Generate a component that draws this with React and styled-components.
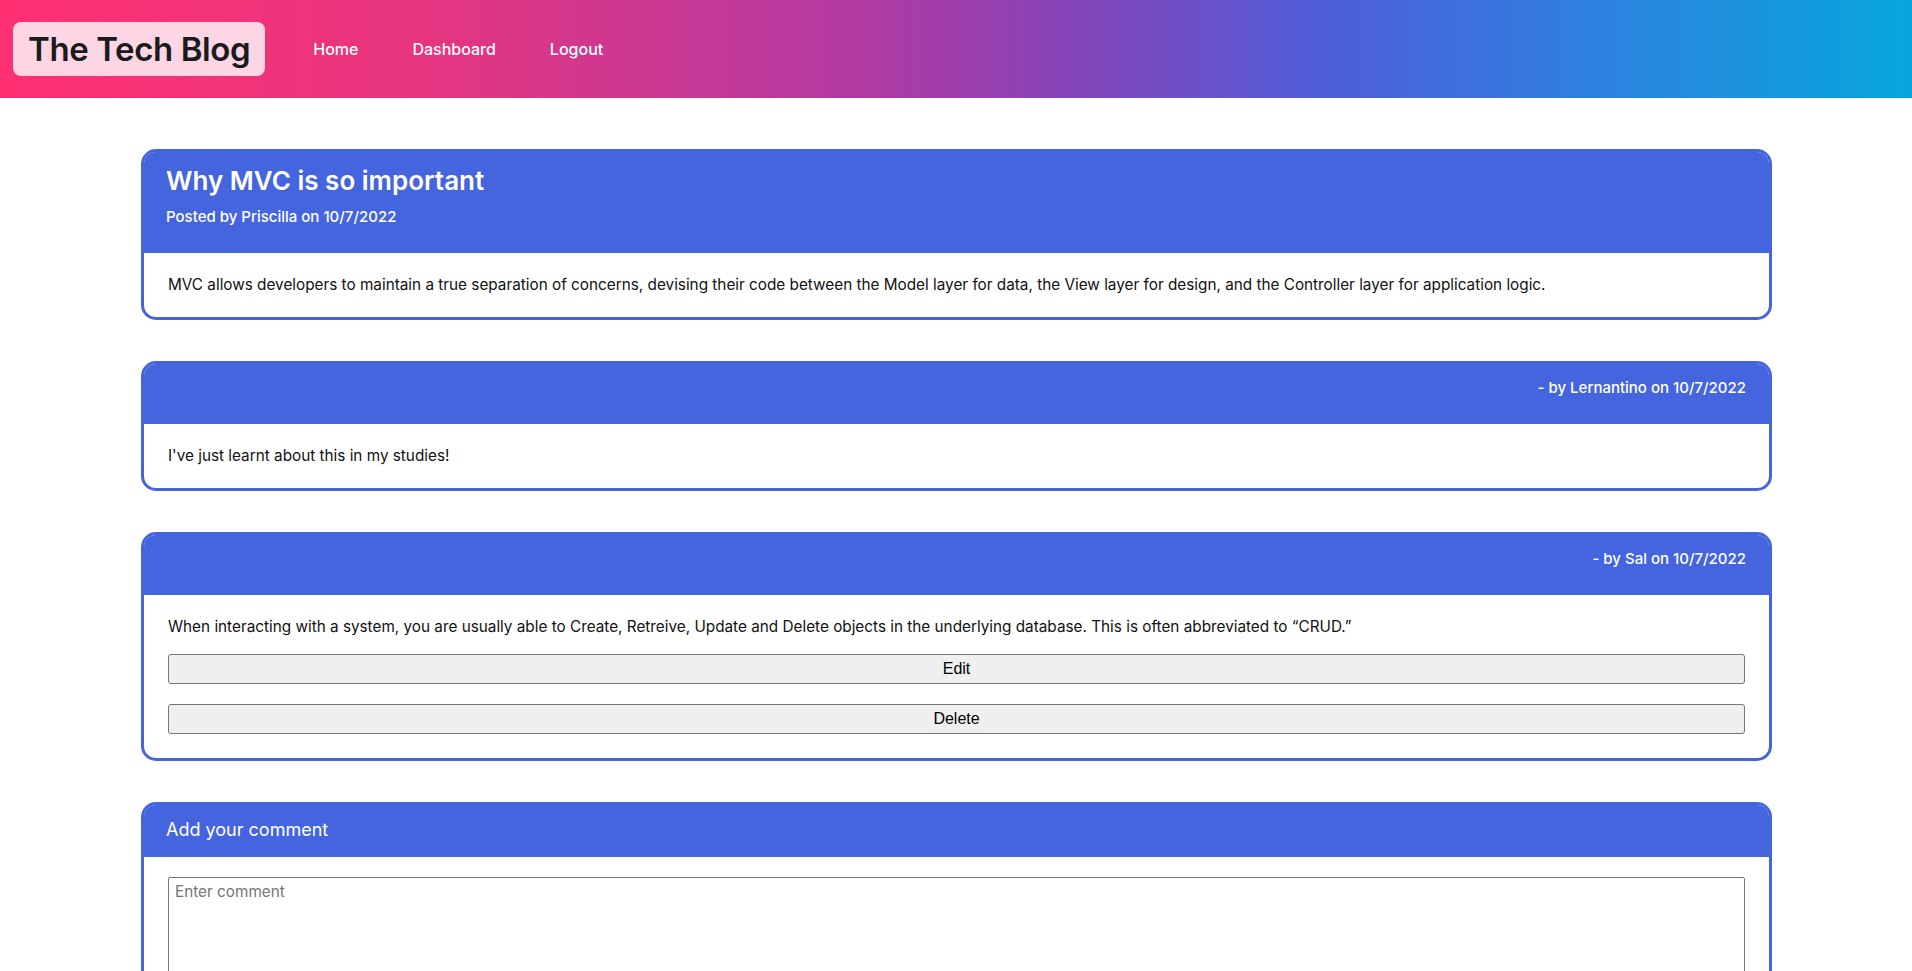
import React from "react";
import styled, { createGlobalStyle } from "styled-components";

const Global = createGlobalStyle`
  html, body { margin: 0; padding: 0; background: #fff; }
  body { font-family: Inter, "Noto Sans", sans-serif; color: #111; }
  * { box-sizing: border-box; }
`;

const Header = styled.header`
  height: 98px;
  display: flex;
  align-items: center;
  padding-left: 13px;
  background: linear-gradient(90deg, #ff2f72 0%, #e6357f 22%, #b13aa2 45%, #8a43b6 55%, #4d5edb 70%, #2f80df 83%, #07a6dc 100%);
`;

const Logo = styled.div`
  height: 54px;
  display: flex;
  align-items: center;
  padding: 0 15px;
  border-radius: 8px;
  background: #fcd6e4;
  color: #1b1b1b;
  font-size: 33px;
  font-weight: 600;
  letter-spacing: -0.4px;
`;

const Nav = styled.nav`
  display: flex;
  gap: 54px;
  margin-left: 48px;
`;

const NavLink = styled.a`
  color: #fff;
  font-size: 16px;
  font-weight: 500;
  text-decoration: none;
`;

const Main = styled.main`
  display: flex;
  flex-direction: column;
  gap: 41px;
  padding: 51px 140px 40px 141px;
`;

const Card = styled.section`
  border: 3px solid #4565df;
  border-radius: 15px;
  overflow: hidden;
  background: #fff;
`;

const CardHead = styled.div`
  background: #4565df;
  color: #fff;
  display: flex;
  flex-direction: column;
  align-items: ${(p) => (p.$right ? "flex-end" : "flex-start")};
  justify-content: flex-start;
  padding: ${(p) => p.$pad};
  height: ${(p) => p.$h}px;
`;

const Title = styled.h2`
  margin: 0;
  font-size: 26px;
  font-weight: 600;
  line-height: 34px;
`;

const Meta = styled.div`
  font-size: 15px;
  font-weight: 500;
  line-height: 22px;
  margin-top: ${(p) => p.$mt || 0}px;
`;

const HeadLabel = styled.div`
  font-size: 18px;
  font-weight: 400;
  line-height: 24px;
`;

const CardBody = styled.div`
  padding: ${(p) => p.$pt || 21}px 24px ${(p) => p.$pb || 21}px 24px;
  display: flex;
  flex-direction: column;
`;

const Text = styled.p`
  margin: 0;
  font-size: 15.3px;
  line-height: 22px;
  color: #111;
`;

const Button = styled.button`
  margin-top: ${(p) => p.$mt}px;
  height: 30px;
  width: 100%;
  background: #efefef;
  border: 1px solid #767676;
  border-radius: 3px;
  font-family: "Liberation Sans", Arial, sans-serif;
  font-size: 16px;
  color: #000;
`;

const TextArea = styled.textarea`
  width: 100%;
  height: 120px;
  border: 1px solid #767676;
  border-radius: 2px;
  padding: 4px 6px;
  font-family: Inter, sans-serif;
  font-size: 15.3px;
  resize: vertical;
  &::placeholder { color: #757575; }
`;

export default function App() {
  return (
    <>
      <Global />
      <Header>
        <Logo>The Tech Blog</Logo>
        <Nav>
          <NavLink href="#">Home</NavLink>
          <NavLink href="#">Dashboard</NavLink>
          <NavLink href="#">Logout</NavLink>
        </Nav>
      </Header>
      <Main>
        <Card>
          <CardHead $h={101} $pad="12px 22px 0">
            <Title>Why MVC is so important</Title>
            <Meta $mt={8}>Posted by Priscilla on 10/7/2022</Meta>
          </CardHead>
          <CardBody>
            <Text>
              MVC allows developers to maintain a true separation of concerns, devising their code between the Model layer for data, the View layer for design, and the Controller layer for application logic.
            </Text>
          </CardBody>
        </Card>
        <Card>
          <CardHead $h={60} $right $pad="13px 23px 0">
            <Meta>- by Lernantino on 10/7/2022</Meta>
          </CardHead>
          <CardBody>
            <Text>I've just learnt about this in my studies!</Text>
          </CardBody>
        </Card>
        <Card>
          <CardHead $h={60} $right $pad="13px 23px 0">
            <Meta>- by Sal on 10/7/2022</Meta>
          </CardHead>
          <CardBody $pb={24}>
            <Text>
              When interacting with a system, you are usually able to Create, Retreive, Update and Delete objects in the underlying database. This is often abbreviated to “CRUD.”
            </Text>
            <Button $mt={16}>Edit</Button>
            <Button $mt={20}>Delete</Button>
          </CardBody>
        </Card>
        <Card>
          <CardHead $h={52} $pad="13px 22px 0">
            <HeadLabel>Add your comment</HeadLabel>
          </CardHead>
          <CardBody $pt={20}>
            <TextArea placeholder="Enter comment" />
          </CardBody>
        </Card>
      </Main>
    </>
  );
}
